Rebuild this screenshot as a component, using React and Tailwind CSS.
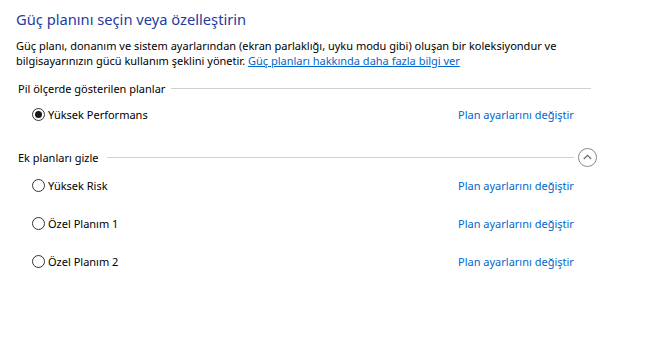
import React from 'react'

const plans = ['Yüksek Risk', 'Özel Planım 1', 'Özel Planım 2']

function Radio({ checked }) {
  return (
    <span className="flex h-[13px] w-[13px] items-center justify-center rounded-full border border-[#333333] bg-white">
      {checked && <span className="h-[7px] w-[7px] rounded-full bg-[#1a1a1a]" />}
    </span>
  )
}

function PlanRow({ name, checked, className = '' }) {
  return (
    <div className={`grid grid-cols-[442px_auto] items-center ${className}`}>
      <label className="flex items-center gap-[3px] pl-[16px]">
        <Radio checked={checked} />
        <span>{name}</span>
      </label>
      <a className="text-[#0066cc] cursor-pointer">Plan ayarlarını değiştir</a>
    </div>
  )
}

export default function App() {
  return (
    <div
      className="min-h-[361px] w-[655px] bg-white pl-[16px] pt-[8px] text-[11px] leading-[15px] text-black"
      style={{ fontFamily: '"Segoe UI", "Noto Sans", sans-serif' }}
    >
      <h1 className="text-[14.7px] leading-[22px] text-[#1e3c9f]">Güç planını seçin veya özelleştirin</h1>

      <p className="mt-[8px]">
        Güç planı, donanım ve sistem ayarlarından (ekran parlaklığı, uyku modu gibi) oluşan bir koleksiyondur ve
        <br />
        bilgisayarınızın gücü kullanım şeklini yönetir.{' '}
        <a className="text-[#0066cc] underline cursor-pointer">Güç planları hakkında daha fazla bilgi ver</a>
      </p>

      <div className="mt-[12px] flex h-[16px] items-center pr-[64px]">
        <span className="pl-[2px] pr-[6px]">Pil ölçerde gösterilen planlar</span>
        <span className="h-px flex-1 bg-[#d0d0d0]" />
      </div>

      <PlanRow name="Yüksek Performans" checked className="mt-[10px] h-[16px]" />

      <div className="mt-[27px] flex h-[16px] items-center pr-[58px]">
        <span className="pl-[2px] pr-[8px]">Ek planları gizle</span>
        <span className="h-px flex-1 bg-[#d0d0d0]" />
        <button className="ml-[4px] flex h-[19px] w-[19px] items-center justify-center rounded-full border border-[#8a8a8a] bg-white">
          <svg width="9" height="6" viewBox="0 0 9 6" fill="none">
            <path d="M0.8 5L4.5 1.3L8.2 5" stroke="#6a6a6a" strokeWidth="1.2" />
          </svg>
        </button>
      </div>

      <div className="mt-[2px]">
        {plans.map((p) => (
          <PlanRow key={p} name={p} className="h-[37.7px]" />
        ))}
      </div>
    </div>
  )
}
